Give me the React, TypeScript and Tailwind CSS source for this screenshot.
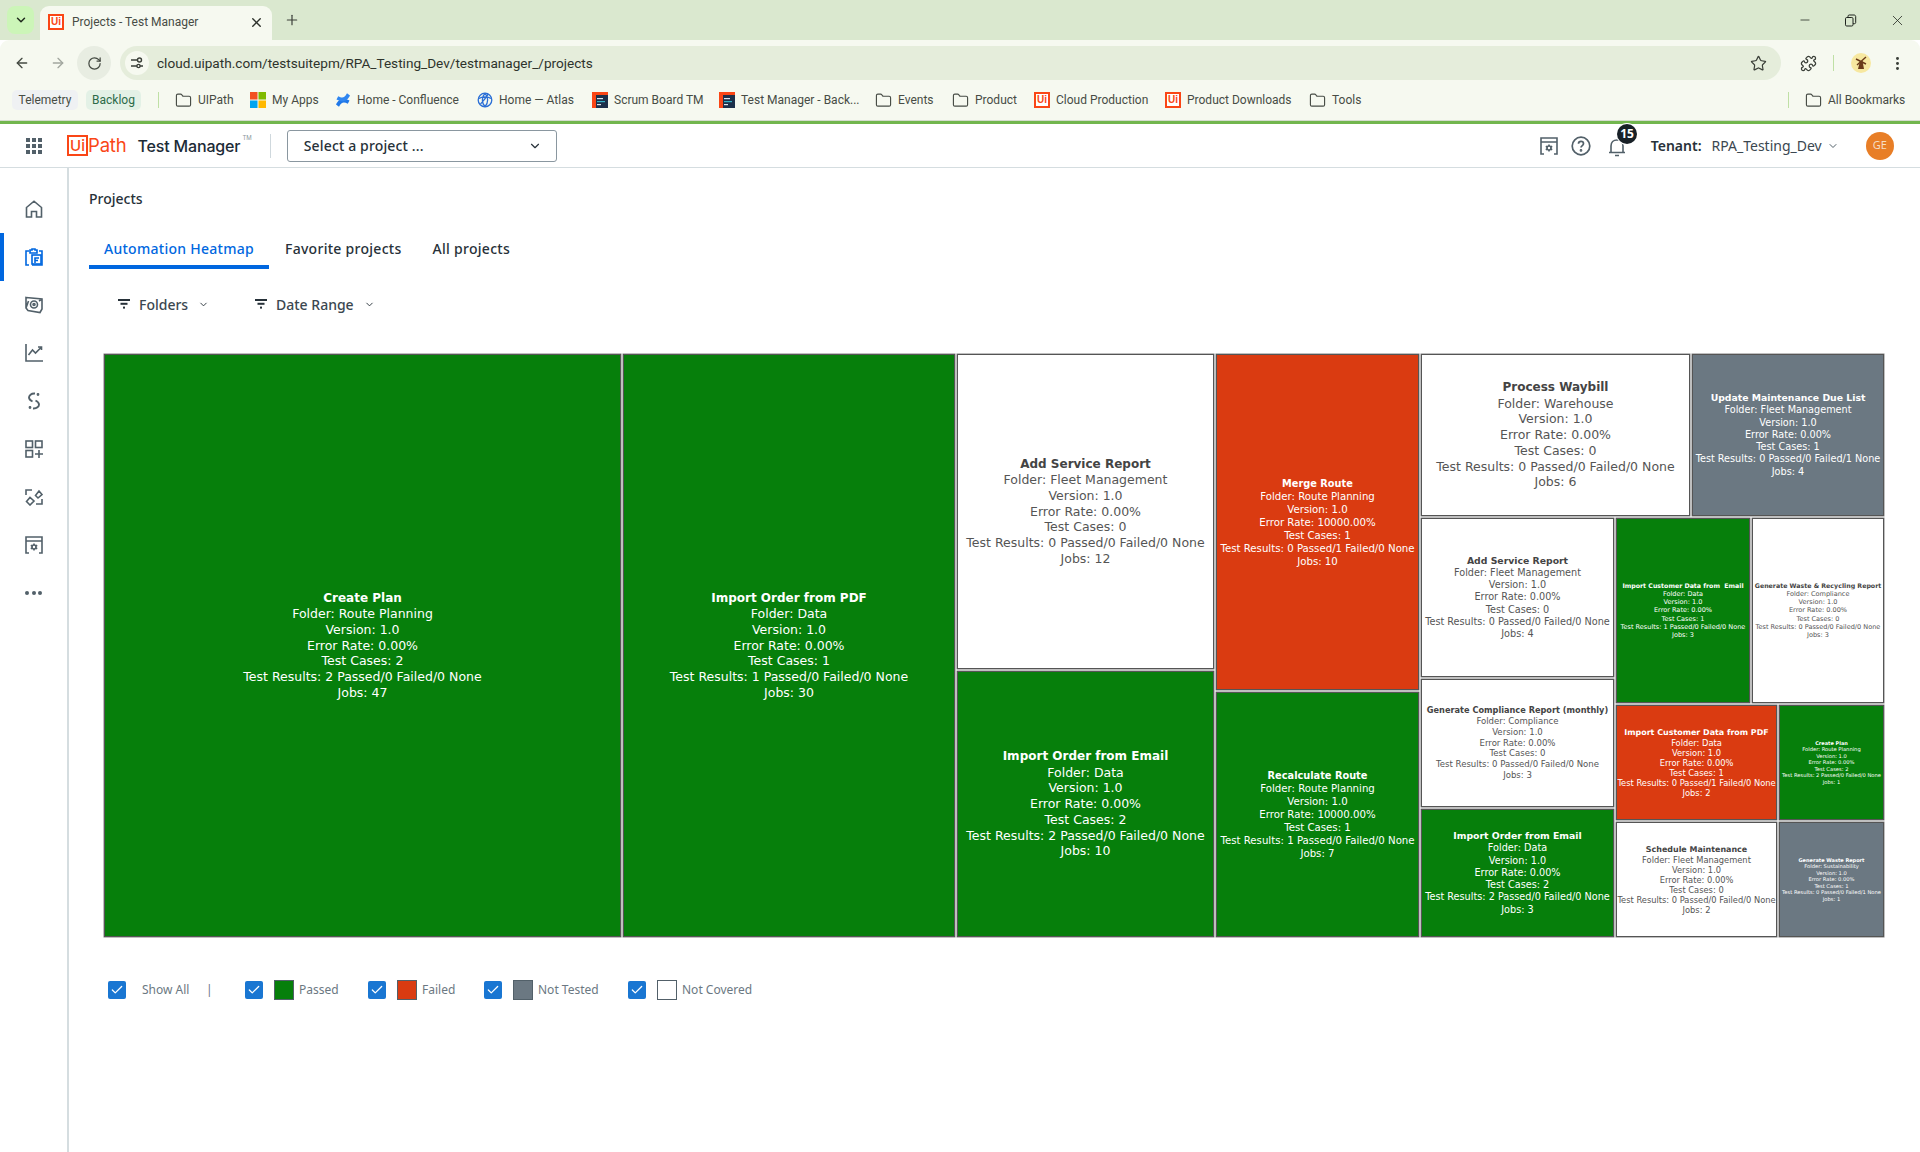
import React from "react";
import { ArrowLeft, ArrowRight, RotateCw, Star, Puzzle, X, Plus, Minus, ChevronDown, Folder, EllipsisVertical, Check } from "lucide-react";

const colorCls: Record<string, string> = {
  g: "bg-[#067f0b] text-white",
  r: "bg-[#da3b11] text-white",
  s: "bg-[#6b7882] text-white",
  w: "bg-white text-[#555555]",
};

function Cell(p: { cls: string; c: string; f: string; t: string; fo: string; e: string; tc: string; r: string; j: string }) {
  return (
    <div className={`${p.cls} ${colorCls[p.c]} ${p.f} shrink-0 border border-[#555555] shadow-[0_0_0_0.5px_#808080] flex flex-col items-center justify-center text-center whitespace-pre overflow-hidden`}>
      <div className={`font-bold text-[0.96em] ${p.c === "w" ? "text-[#444444]" : ""}`}>{p.t}</div>
      <div>Folder: {p.fo}</div>
      <div>Version: 1.0</div>
      <div>Error Rate: {p.e}</div>
      <div>Test Cases: {p.tc}</div>
      <div>Test Results: {p.r}</div>
      <div>Jobs: {p.j}</div>
    </div>
  );
}

const FA = "font-['DejaVu_Sans',sans-serif] text-[12.5px] leading-[15.7px]";
const FB = "font-['DejaVu_Sans',sans-serif] text-[10.2px] leading-[13px]";
const FC = "font-['DejaVu_Sans',sans-serif] text-[9.7px] leading-[12.25px]";
const FD = "font-['DejaVu_Sans',sans-serif] text-[8.55px] leading-[10.9px]";
const FE = "font-['DejaVu_Sans',sans-serif] text-[8.3px] leading-[10px]";
const FF = "font-['DejaVu_Sans',sans-serif] text-[6.55px] leading-[8.2px]";
const FG = "font-['DejaVu_Sans',sans-serif] text-[5.2px] leading-[6.5px]";

const P000 = "0 Passed/0 Failed/0 None";

function Treemap() {
  return (
    <div className="ml-[15px] mt-[40px] flex gap-[2px] w-[1780px] h-[583px]">
      <Cell cls="w-[517px] h-[583px]" c="g" f={FA} t="Create Plan" fo="Route Planning" e="0.00%" tc="2" r="2 Passed/0 Failed/0 None" j="47" />
      <Cell cls="w-[332px] h-[583px]" c="g" f={FA} t="Import Order from PDF" fo="Data" e="0.00%" tc="1" r="1 Passed/0 Failed/0 None" j="30" />
      <div className="w-[257px] flex flex-col gap-[2px] shrink-0">
        <Cell cls="w-[257px] h-[315px]" c="w" f={FA} t="Add Service Report" fo="Fleet Management" e="0.00%" tc="0" r={P000} j="12" />
        <Cell cls="w-[257px] h-[266px]" c="g" f={FA} t="Import Order from Email" fo="Data" e="0.00%" tc="2" r="2 Passed/0 Failed/0 None" j="10" />
      </div>
      <div className="w-[203px] flex flex-col gap-[2px] shrink-0">
        <Cell cls="w-[203px] h-[336px]" c="r" f={FB} t="Merge Route" fo="Route Planning" e="10000.00%" tc="1" r="0 Passed/1 Failed/0 None" j="10" />
        <Cell cls="w-[203px] h-[245px]" c="g" f={FB} t="Recalculate Route" fo="Route Planning" e="10000.00%" tc="1" r="1 Passed/0 Failed/0 None" j="7" />
      </div>
      <div className="w-[463px] flex flex-col gap-[2px] shrink-0">
        <div className="flex gap-[2px] h-[162px]">
          <Cell cls="w-[269px] h-[162px]" c="w" f={FA} t="Process Waybill" fo="Warehouse" e="0.00%" tc="0" r={P000} j="6" />
          <Cell cls="w-[192px] h-[162px]" c="s" f={FC} t="Update Maintenance Due List" fo="Fleet Management" e="0.00%" tc="1" r="0 Passed/0 Failed/1 None" j="4" />
        </div>
        <div className="flex gap-[2px] h-[419px]">
          <div className="w-[193px] flex flex-col gap-[2px] shrink-0">
            <Cell cls="w-[193px] h-[159px]" c="w" f={FC} t="Add Service Report" fo="Fleet Management" e="0.00%" tc="0" r={P000} j="4" />
            <Cell cls="w-[193px] h-[128px]" c="w" f={FD} t="Generate Compliance Report (monthly)" fo="Compliance" e="0.00%" tc="0" r={P000} j="3" />
            <Cell cls="w-[193px] h-[128px]" c="g" f={FC} t="Import Order from Email" fo="Data" e="0.00%" tc="2" r="2 Passed/0 Failed/0 None" j="3" />
          </div>
          <div className="w-[268px] flex flex-col gap-[2px] shrink-0">
            <div className="flex gap-[2px] h-[185px]">
              <Cell cls="w-[134px] h-[185px]" c="g" f={FF} t="Import Customer Data from  Email" fo="Data" e="0.00%" tc="1" r="1 Passed/0 Failed/0 None" j="3" />
              <Cell cls="w-[132px] h-[185px]" c="w" f={FF} t="Generate Waste & Recycling Report" fo="Compliance" e="0.00%" tc="0" r={P000} j="3" />
            </div>
            <div className="flex gap-[2px] h-[115px]">
              <Cell cls="w-[161px] h-[115px]" c="r" f={FE} t="Import Customer Data from PDF" fo="Data" e="0.00%" tc="1" r="0 Passed/1 Failed/0 None" j="2" />
              <Cell cls="w-[105px] h-[115px]" c="g" f={FG} t="Create Plan" fo="Route Planning" e="0.00%" tc="2" r="2 Passed/0 Failed/0 None" j="1" />
            </div>
            <div className="flex gap-[2px] h-[115px]">
              <Cell cls="w-[161px] h-[115px]" c="w" f={FE} t="Schedule Maintenance" fo="Fleet Management" e="0.00%" tc="0" r={P000} j="2" />
              <Cell cls="w-[105px] h-[115px]" c="s" f={FG} t="Generate Waste Report" fo="Sustainability" e="0.00%" tc="1" r="0 Passed/0 Failed/1 None" j="1" />
            </div>
          </div>
        </div>
      </div>
    </div>
  );
}

function UiBox() {
  return (
    <span className="w-[16px] h-[16px] border-[2px] text-[10px] shrink-0 border-[#fa4616] bg-white text-[#fa4616] flex items-center justify-center font-['Liberation_Sans',sans-serif] font-bold leading-none">
      Ui
    </span>
  );
}

function FolderIcon() {
  return <Folder size={17} strokeWidth={1.6} className="text-[#474c45] shrink-0" />;
}

function MsIcon() {
  return (
    <svg width="16" height="16" viewBox="0 0 16 16" className="shrink-0">
      <rect width="7.5" height="7.5" fill="#f25022" />
      <rect x="8.5" width="7.5" height="7.5" fill="#7fba00" />
      <rect y="8.5" width="7.5" height="7.5" fill="#00a4ef" />
      <rect x="8.5" y="8.5" width="7.5" height="7.5" fill="#ffb900" />
    </svg>
  );
}

function ConfluenceIcon() {
  return (
    <svg width="16" height="16" viewBox="0 0 16 16" className="shrink-0">
      <path d="M1 12.5C3.5 8 6.5 4.5 14.5 8.5L12.8 11.8C8.5 9.5 6.5 10.3 4 14.8Z" fill="#1f78e8" />
      <path d="M15 3.5C12.5 8 9.5 11.5 1.5 7.5L3.2 4.2C7.5 6.5 9.5 5.7 12 1.2Z" fill="#2f86f0" />
    </svg>
  );
}

function AtlasIcon() {
  return (
    <svg width="16" height="16" viewBox="0 0 16 16" fill="none" stroke="#2b6fd6" strokeWidth="1.3" className="shrink-0">
      <circle cx="8" cy="8" r="6.8" />
      <path d="M2 6.5C5 4.5 11 4.5 14 6.5M8 1.2C4.5 5 4.5 11 8 14.8M8 1.2C11.5 5 11.5 11 8 14.8M3.5 12C6 9 10 5 11 2" />
    </svg>
  );
}

function BoardIcon() {
  return (
    <svg width="16" height="16" viewBox="0 0 16 16" className="shrink-0">
      <rect width="16" height="16" fill="#fa4616" />
      <rect x="4" y="3" width="12" height="13" fill="#1c2f4a" />
      <rect x="5" y="6" width="6" height="1.2" fill="#dfe6ee" />
      <rect x="5" y="9" width="8" height="1.2" fill="#37b3c8" />
      <rect x="5" y="12" width="4" height="1.2" fill="#dfe6ee" />
    </svg>
  );
}

function BM({ w, icon, label }: { w: string; icon: React.ReactNode; label: string }) {
  return (
    <div className={`${w} shrink-0 flex items-center gap-[6px] whitespace-nowrap`}>
      {icon}
      <span>{label}</span>
    </div>
  );
}

function BrowserChrome() {
  return (
    <div className="font-['Roboto',sans-serif] text-[#474c45]">
      <div className="h-[40px] bg-[#dae8cf] flex relative">
        <div className="ml-[7px] mt-[6px] w-[27px] h-[28px] rounded-[8px] bg-[#ccf5b8] flex items-center justify-center">
          <ChevronDown size={14} strokeWidth={2.5} className="text-[#1f2a1c]" />
        </div>
        <div className="ml-[6px] mt-[6px] w-[232px] h-[34px] rounded-t-[9px] bg-[#f6f9f0] flex items-center text-[12px] pb-[2px]">
          <span className="ml-[8px]"><UiBox /></span>
          <span className="ml-[8px]">Projects - Test Manager</span>
          <X size={15} strokeWidth={2.2} className="ml-[51px] text-[#2d312b]" />
        </div>
        <Plus size={16} strokeWidth={1.8} className="ml-[12px] mt-[12px] text-[#3b3f39]" />
        <div className="ml-auto flex items-center gap-[32px] pr-[14px] text-[#1f231e]">
          <Minus size={14} strokeWidth={1.3} />
          <svg width="13" height="13" viewBox="0 0 13 13" fill="none" stroke="#1f231e" strokeWidth="1"><rect x="1.5" y="3.5" width="7.5" height="8.5" rx="1.2" /><path d="M4 3V2.2C4 1.5 4.5 1 5.2 1H10C11 1 11.7 1.7 11.7 2.5V8.5C11.7 9.2 11.2 9.7 10.5 9.7H9" /></svg>
          <X size={17} strokeWidth={1.1} />
        </div>
      </div>
      <div className="h-[40px] bg-[#f6f9f0] rounded-t-[9px] flex items-end">
        <ArrowLeft size={16} strokeWidth={2} className="ml-[14px] mb-[9px] text-[#444a42]" />
        <ArrowRight size={16} strokeWidth={2} className="ml-[20px] mb-[9px] text-[#a2a79f]" />
        <div className="ml-[11px] w-[34px] h-[34px] rounded-full bg-[#e8ede2] flex items-center justify-center">
          <RotateCw size={15} strokeWidth={2} className="text-[#444a42]" />
        </div>
        <div className="ml-[9px] w-[1661px] h-[34px] rounded-full bg-[#e5eddb] flex items-center">
          <div className="ml-[5px] w-[24px] h-[24px] rounded-full bg-[#f6f9f0] flex items-center justify-center">
            <svg width="14" height="14" viewBox="0 0 14 14" fill="none" stroke="#3a3f38" strokeWidth="1.4"><path d="M1 4H7M10 10H13M1 10H7" /><circle cx="9.5" cy="4" r="2" /><circle cx="8.5" cy="10" r="1.6" /></svg>
          </div>
          <span className="ml-[8px] text-[13.6px] text-[#2e332c]">cloud.uipath.com/testsuitepm/RPA_Testing_Dev/testmanager_/projects</span>
          <Star size={17} strokeWidth={1.7} className="ml-auto mr-[14px] text-[#3a3f38]" />
        </div>
        <Puzzle size={17} strokeWidth={1.8} className="ml-[19px] mb-[8px] text-[#3a3f38]" />
        <div className="ml-[16px] mb-[9px] w-[1px] h-[16px] bg-[#bfe0a5]" />
        <div className="ml-[17px] mb-[7px] w-[20px] h-[20px] rounded-full bg-[#f7e8a0] flex items-center justify-center overflow-hidden">
          <svg width="16" height="16" viewBox="0 0 16 16"><path d="M5 14L7 6H9.5L11 14Z" fill="#6b3b1a" /><path d="M3 4L13 9M13 2L4 10" stroke="#6b3b1a" strokeWidth="1.4" /></svg>
        </div>
        <EllipsisVertical size={17} strokeWidth={2.2} className="ml-[18px] mb-[8px] text-[#3a3f38]" />
      </div>
      <div className="h-[40px] bg-[#f6f9f0] flex items-center text-[12px]">
        <span className="ml-[12px] w-[66px] h-[20px] rounded-[5px] bg-[#eff1f3] flex items-center justify-center">Telemetry</span>
        <span className="ml-[8px] w-[55px] h-[20px] rounded-[5px] bg-[#e3f1e6] text-[#2c6b49] flex items-center justify-center">Backlog</span>
        <div className="ml-[17px] w-[1px] h-[16px] bg-[#bfe0a5]" />
        <div className="ml-[16px] flex items-center">
          <BM w="w-[75px]" icon={<FolderIcon />} label="UIPath" />
          <BM w="w-[85px]" icon={<MsIcon />} label="My Apps" />
          <BM w="w-[142px]" icon={<ConfluenceIcon />} label="Home - Confluence" />
          <BM w="w-[115px]" icon={<AtlasIcon />} label="Home — Atlas" />
          <BM w="w-[127px]" icon={<BoardIcon />} label="Scrum Board TM" />
          <BM w="w-[156px]" icon={<BoardIcon />} label="Test Manager - Back..." />
          <BM w="w-[77px]" icon={<FolderIcon />} label="Events" />
          <BM w="w-[82px]" icon={<FolderIcon />} label="Product" />
          <BM w="w-[131px]" icon={<UiBox />} label="Cloud Production" />
          <BM w="w-[144px]" icon={<UiBox />} label="Product Downloads" />
          <BM w="w-[479px]" icon={<FolderIcon />} label="Tools" />
        </div>
        <div className="w-[1px] h-[16px] bg-[#bfe0a5]" />
        <div className="ml-[16px]"><BM w="w-[100px]" icon={<FolderIcon />} label="All Bookmarks" /></div>
      </div>
      <div className="h-[4px] bg-[#72b64e] border-t border-t-[#d5dcce]" />
    </div>
  );
}

function GearBox({ className }: { className?: string }) {
  return (
    <svg width="18" height="18" viewBox="0 0 18 18" fill="none" stroke="currentColor" strokeWidth="1.6" className={className}>
      <path d="M4 17H1V1H17V17H14M1 5H17" />
      <circle cx="9" cy="11" r="2" />
      <path d="M9 7.5V9M9 13V14.5M5.8 9.2L7.2 10M10.8 12L12.2 12.8M5.8 12.8L7.2 12M10.8 10L12.2 9.2" />
    </svg>
  );
}

function AppHeader() {
  return (
    <div className="h-[44px] bg-white border-b border-b-[#d5dde0] flex items-center relative">
      <svg width="16" height="16" viewBox="0 0 16 16" fill="#526069" className="ml-[26px] shrink-0">
        {[0, 6, 12].map((y) => [0, 6, 12].map((x) => <rect key={`${x}-${y}`} x={x} y={y} width="4" height="4" />))}
      </svg>
      <UiBoxLarge />
      <span className="text-[#fa4616] text-[18.5px] font-['Inter',sans-serif] font-normal tracking-[-0.01em]">Path</span>
      <span className="ml-[11px] text-[#1c2b36] text-[16px] font-['Inter',sans-serif] font-medium tracking-[-0.01em] w-[105px] whitespace-nowrap">Test Manager</span>
      <span className="self-start mt-[9px] text-[6px] text-[#8a97a0] font-['Inter',sans-serif]">TM</span>
      <div className="ml-[18px] w-[1px] h-[24px] bg-[#cfd8dd]" />
      <div className="ml-[16px] w-[270px] h-[32px] border border-[#8a97a0] rounded-[3px] flex items-center font-['Noto_Sans',sans-serif] text-[14px] font-medium text-[#273139]">
        <span className="ml-[16px] tracking-[0.01em]">Select a project ...</span>
        <ChevronDown size={14} strokeWidth={2} className="ml-auto mr-[14px] text-[#273139]" />
      </div>
      <GearBox className="ml-[983px] text-[#526069] shrink-0" />
      <svg width="20" height="20" viewBox="0 0 20 20" fill="none" stroke="#526069" strokeWidth="1.7" className="ml-[13px] shrink-0">
        <circle cx="10" cy="10" r="8.8" />
        <path d="M7.5 7.8C7.5 6.3 8.6 5.4 10 5.4S12.5 6.3 12.5 7.7C12.5 9.6 10 9.6 10 11.6" />
        <circle cx="10" cy="14.4" r="0.5" fill="#526069" />
      </svg>
      <svg width="18" height="20" viewBox="0 0 18 20" fill="none" stroke="#526069" strokeWidth="1.6" className="ml-[17px] mt-[2px] shrink-0">
        <path d="M1 15.5H17M3 15.5V9C3 5.5 5.5 3 9 3S15 5.5 15 9V15.5M7 18.5H11" />
      </svg>
      <span className="absolute left-[1617px] top-[0px] w-[20px] h-[20px] rounded-full bg-[#182027] ring-1 ring-white text-white text-[12px] font-bold font-['Noto_Sans',sans-serif] flex items-center justify-center">15</span>
      <span className="ml-[25px] text-[14px] font-semibold text-[#273139] font-['Noto_Sans',sans-serif]">Tenant:</span>
      <span className="ml-[10px] text-[14px] text-[#3b4750] font-['Noto_Sans',sans-serif]">RPA_Testing_Dev</span>
      <ChevronDown size={12} strokeWidth={2} className="ml-[5px] text-[#526069]" />
      <span className="ml-[27px] w-[28px] h-[28px] rounded-full bg-[#e87e26] text-[#f6ddc4] text-[11px] font-['Noto_Sans',sans-serif] flex items-center justify-center">GE</span>
    </div>
  );
}

function UiBoxLarge() {
  return (
    <span className="ml-[25px] w-[21px] h-[21px] border-[2px] border-[#fa4616] text-[#fa4616] flex items-center justify-center font-['Inter',sans-serif] text-[15px] font-medium leading-none shrink-0">
      Ui
    </span>
  );
}

function SideIcon({ children, active }: { children: React.ReactNode; active?: boolean }) {
  return (
    <div className="h-[48px] w-full flex items-center justify-center relative">
      {active && <div className="absolute left-0 top-0 w-[4px] h-[48px] bg-[#0067df]" />}
      <svg width="18" height="18" viewBox="0 0 18 18" fill="none" stroke={active ? "#0067df" : "#526069"} strokeWidth="1.6">
        {children}
      </svg>
    </div>
  );
}

function Sidebar() {
  return (
    <div className="w-[69px] shrink-0 border-r-2 border-r-[#d5dde0] pt-[17px] bg-white">
      <SideIcon><path d="M1.5 17V7.5L9 1.2L16.5 7.5V17H11.5V11.5H6.5V17Z" /></SideIcon>
      <SideIcon active><path d="M4 3H1V17H4M14 3H17V17H7M5 5H12V2H10V1H7V2H5Z" /><rect x="7" y="7" width="9" height="9" /><path d="M10 15V10H14M10 12.5H13" /></SideIcon>
      <SideIcon><path d="M1 1.5L17 3V13L15 16.5L3 14.5L1 12ZM1 12L3.5 5M17 3L14 5" /><circle cx="9" cy="8.5" r="3.5" /><circle cx="9" cy="8.5" r="1" /></SideIcon>
      <SideIcon><path d="M1 0V17H18M3.5 11L7.5 6L10.5 9L16.5 3M13 3H16.5V6" /></SideIcon>
      <SideIcon><path d="M10 1.5C6 1.2 4 3.5 4 5.5C4 7.5 5.5 8.5 7.5 9.5M8 16.5C12 16.8 14 14.5 14 12.5C14 10.5 12.5 9.5 10.5 8.5" strokeWidth="1.9" /><circle cx="13" cy="2.5" r="0.6" fill="#526069" /><circle cx="5" cy="15.5" r="0.6" fill="#526069" /></SideIcon>
      <SideIcon><rect x="1" y="1" width="6.5" height="6.5" /><rect x="10.5" y="1" width="6.5" height="6.5" /><rect x="1" y="10.5" width="6.5" height="6.5" /><path d="M10 14H18M14 10V18" /></SideIcon>
      <SideIcon><path d="M1 7V2H7M17 11V16H11M10.5 7.5L14 3L17 6.5L13 10ZM1.5 13.5L5 9.5L9 13L5 17Z" /></SideIcon>
      <SideIcon><path d="M4 17H1V1H17V17H14M1 5H17" /><circle cx="9" cy="11" r="2" /><path d="M9 7.5V9M9 13V14.5M5.8 9.2L7.2 10M10.8 12L12.2 12.8M5.8 12.8L7.2 12M10.8 10L12.2 9.2" /></SideIcon>
      <div className="h-[48px] flex items-center justify-center gap-[2.5px]">
        <span className="w-[4px] h-[4px] rounded-full bg-[#526069]" />
        <span className="w-[4px] h-[4px] rounded-full bg-[#526069]" />
        <span className="w-[4px] h-[4px] rounded-full bg-[#526069]" />
      </div>
    </div>
  );
}

function FilterBtn({ label, w }: { label: string; w: string }) {
  return (
    <div className={`${w} flex items-center whitespace-nowrap`}>
      <svg width="12" height="10" viewBox="0 0 12 10" fill="#273139"><rect width="12" height="2" /><rect x="2.5" y="3.8" width="7" height="2" /><rect x="5" y="7.6" width="2" height="2" /></svg>
      <span className="ml-[9px]">{label}</span>
      <ChevronDown size={11} strokeWidth={2} className="ml-[10px] text-[#273139]" />
    </div>
  );
}

function CB() {
  return (
    <span className="w-[18px] h-[18px] rounded-[2px] bg-[#1976d2] flex items-center justify-center shrink-0">
      <Check size={14} strokeWidth={2.2} className="text-white" />
    </span>
  );
}

function Legend() {
  return (
    <div className="ml-[19px] mt-[43px] h-[20px] flex items-center text-[12px] text-[#6b7882] whitespace-nowrap">
      <CB />
      <span className="ml-[16px] w-[47px] shrink-0">Show All</span>
      <span className="ml-[17px] w-[20px] shrink-0">|</span>
      <div className="ml-[19px] flex items-center">
        <CB />
        <span className="ml-[11px] w-[20px] h-[20px] border-[1.5px] border-[#526069] bg-[#067f0b]" />
        <span className="ml-[5px] w-[69px]">Passed</span>
      </div>
      <CB />
      <span className="ml-[11px] w-[20px] h-[20px] border-[1.5px] border-[#526069] bg-[#da3b11]" />
      <span className="ml-[5px] w-[62px]">Failed</span>
      <CB />
      <span className="ml-[11px] w-[20px] h-[20px] border-[1.5px] border-[#526069] bg-[#6b7882]" />
      <span className="ml-[5px] w-[90px]">Not Tested</span>
      <CB />
      <span className="ml-[11px] w-[20px] h-[20px] border-[1.5px] border-[#526069] bg-white" />
      <span className="ml-[5px]">Not Covered</span>
    </div>
  );
}

export default function App() {
  return (
    <div className="w-[1920px] h-[1152px] bg-white overflow-hidden flex flex-col">
      <BrowserChrome />
      <AppHeader />
      <div className="flex flex-1 min-h-0">
        <Sidebar />
        <div className="flex-1 pl-[20px] font-['Noto_Sans',sans-serif] text-[#273139]">
          <div className="mt-[21px] h-[20px] text-[14px] leading-[20px] font-medium">Projects</div>
          <div className="mt-[22px] h-[38px] flex text-[14px] font-medium tracking-[0.02em]">
            <div className="w-[180px] h-[38px] border-b-4 border-b-[#0067df] text-[#0067df] flex items-center justify-center">Automation Heatmap</div>
            <div className="ml-[16px] h-[38px] flex items-center pb-[4px]">Favorite projects</div>
            <div className="ml-[31px] h-[38px] flex items-center pb-[4px]">All projects</div>
          </div>
          <div className="ml-[29px] mt-[25px] h-[20px] flex text-[14px] font-medium text-[#3b4750]">
            <FilterBtn label="Folders" w="w-[137px]" />
            <FilterBtn label="Date Range" w="w-[130px]" />
          </div>
          <Treemap />
          <Legend />
        </div>
      </div>
    </div>
  );
}
